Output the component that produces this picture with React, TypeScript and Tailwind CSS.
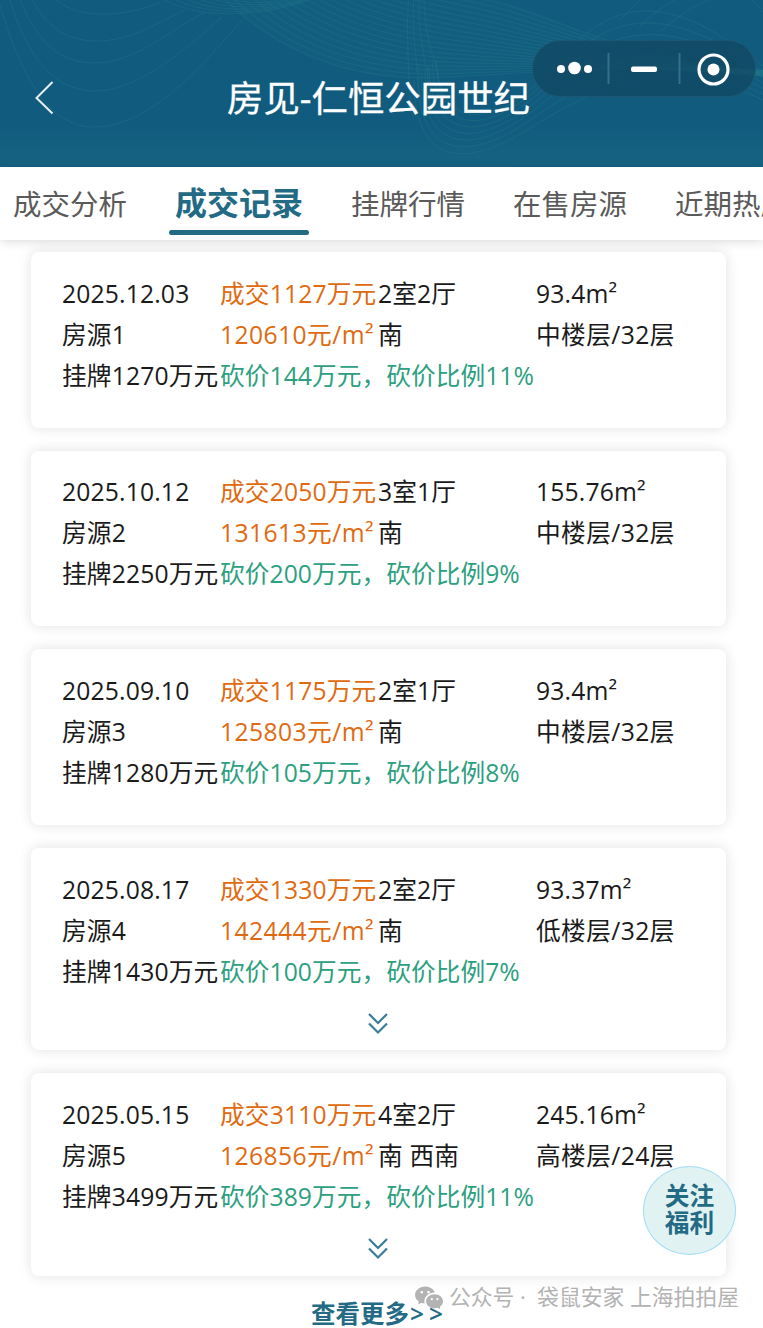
import clsx from "clsx";
import { BsWechat } from "react-icons/bs";

type Deal = {
  date: string;
  price: string;
  layout: string;
  area: string;
  name: string;
  unit: string;
  facing: string;
  floor: string;
  listed: string;
  cut: string;
  more?: boolean;
};

const deals: Deal[] = [
  { date: "2025.12.03", price: "成交1127万元", layout: "2室2厅", area: "93.4m²", name: "房源1", unit: "120610元/m²", facing: "南", floor: "中楼层/32层", listed: "挂牌1270万元", cut: "砍价144万元，砍价比例11%" },
  { date: "2025.10.12", price: "成交2050万元", layout: "3室1厅", area: "155.76m²", name: "房源2", unit: "131613元/m²", facing: "南", floor: "中楼层/32层", listed: "挂牌2250万元", cut: "砍价200万元，砍价比例9%" },
  { date: "2025.09.10", price: "成交1175万元", layout: "2室1厅", area: "93.4m²", name: "房源3", unit: "125803元/m²", facing: "南", floor: "中楼层/32层", listed: "挂牌1280万元", cut: "砍价105万元，砍价比例8%" },
  { date: "2025.08.17", price: "成交1330万元", layout: "2室2厅", area: "93.37m²", name: "房源4", unit: "142444元/m²", facing: "南", floor: "低楼层/32层", listed: "挂牌1430万元", cut: "砍价100万元，砍价比例7%", more: true },
  { date: "2025.05.15", price: "成交3110万元", layout: "4室2厅", area: "245.16m²", name: "房源5", unit: "126856元/m²", facing: "南 西南", floor: "高楼层/24层", listed: "挂牌3499万元", cut: "砍价389万元，砍价比例11%", more: true },
];

const tabs = ["成交分析", "成交记录", "挂牌行情", "在售房源", "近期热度"];

// Each family blends from one curve to another: a start point plus two cubic segments.
const families = [
  { n: 19, a: [222, -4, 265, 40, 330, 78, 425, 78, 500, 76, 600, 62, 763, 76], b: [350, -40, 400, -12, 450, -12, 510, 6, 580, 28, 650, 66, 763, 70] },
  { n: 7, a: [414, 80, 414, 165, 465, 170, 530, 128, 590, 92, 660, 50, 763, 100], b: [436, 60, 440, 135, 500, 130, 560, 60, 620, -12, 680, 0, 763, 66] },
  { n: 6, a: [155, -6, 190, 20, 260, 20, 320, -4, 325, -6, 328, -8, 330, -10], b: [195, -14, 230, 8, 280, 6, 330, -10, 335, -11, 340, -12, 350, -14] },
  { n: 4, a: [409, -4, 406, 30, 408, 50, 409, 80, 409, 90, 409, 95, 411, 100], b: [424, -4, 424, 20, 428, 45, 436, 65, 438, 80, 440, 95, 444, 100] },
  { n: 3, a: [620, 20, 635, 5, 640, 0, 645, -6, 650, -8, 655, -10, 660, -12], b: [660, 32, 690, 5, 715, -6, 740, -6, 750, -6, 757, 6, 763, 12] },
];

const bowls = [
  "M0 5C12 45 38 127 93 127C150 127 198 70 243 19",
  "M10 0C25 50 50 91 95 91C140 91 190 45 222 17",
  "M20 0C36 38 56 63 95 63C135 63 170 30 205 12",
  "M32 0C46 25 64 41 97 41C130 41 160 22 185 10",
  "M56 0C70 10 82 14 103 14C125 14 142 9 160 3",
];

function Waves() {
  return (
    <svg className="absolute inset-0 h-full w-full" viewBox="0 0 763 167" fill="none" stroke="#2a8290" strokeOpacity="0.26">
      <path d="M222 0C265 40 330 78 425 78C500 76 560 60 610 45C570 25 540 12 500 0Z" fill="#2a8290" fillOpacity="0.08" stroke="none" />
      {bowls.map((d) => (
        <path key={d} d={d} />
      ))}
      {families.map(({ n, a, b }, f) =>
        Array.from({ length: n }, (_, i) => {
          const p = a.map((v, k) => (v + ((b[k] - v) * i) / (n - 1)).toFixed(1));
          return <path key={`${f}-${i}`} d={`M${p[0]} ${p[1]}C${p.slice(2, 8).join(" ")}C${p.slice(8).join(" ")}`} />;
        })
      )}
    </svg>
  );
}

function Header() {
  return (
    <header className="relative h-[167px] bg-linear-to-b from-[#115c7e] from-75% to-[#166484]">
      <Waves />
      <div className="relative flex h-full items-center justify-center pt-[28px]">
        <h1 className="-ml-[6px] text-[36.400px] leading-[50px] text-white [-webkit-text-stroke:0.3px_white]">房见-仁恒公园世纪</h1>
      </div>
      <svg className="absolute left-[34px] top-[80px] h-[35px] w-[21px]" viewBox="0 0 21 35" fill="none" stroke="white" strokeOpacity="0.9" strokeWidth="2">
        <path d="M18.500 2 2.500 18l16 15.500" />
      </svg>
      <div className="absolute left-[532px] top-[40px] flex h-[57px] w-[224px] items-center rounded-full border border-[#2c6078]/50 bg-[#0f4560]/70">
        <svg className="h-full w-full" viewBox="0 0 222 55" fill="white">
          <circle cx="28" cy="28" r="4" />
          <circle cx="41.500" cy="27" r="6.300" />
          <circle cx="55" cy="28" r="4" />
          <path d="M75.500 12v31M146.500 12v31" stroke="#31718a" strokeWidth="2" />
          <rect x="98" y="25.500" width="26" height="5.500" rx="2" />
          <circle cx="180.500" cy="28.500" r="14.500" fill="none" stroke="white" strokeWidth="3.200" />
          <circle cx="180.500" cy="28.500" r="6" />
        </svg>
      </div>
    </header>
  );
}

function DealCard({ deal }: { deal: Deal }) {
  return (
    <article
      className={clsx(
        "rounded-lg bg-white pl-[31px] pt-[20.800px] shadow-[0_0_14px_rgba(0,0,0,0.12)]",
        deal.more ? "h-[202.500px]" : "h-[175.500px]"
      )}
    >
      <div className="grid grid-cols-[repeat(4,158px)] whitespace-nowrap text-[24.700px] leading-[41px] tracking-[0.15px] text-[#1a1a1a]">
        <span>{deal.date}</span>
        <span className="text-[#e06a10]">{deal.price}</span>
        <span>{deal.layout}</span>
        <span>{deal.area}</span>
        <span>{deal.name}</span>
        <span className="tracking-[0.4px] text-[#e06a10]">{deal.unit}</span>
        <span>{deal.facing}</span>
        <span className="tracking-[0.4px]">{deal.floor}</span>
        <span>{deal.listed}</span>
        <span className="col-span-3 tracking-[0.050px] text-[#2ca080]">{deal.cut}</span>
      </div>
      {deal.more && (
        <svg className="ml-[305px] mt-[20px] h-[24px] w-[22px]" viewBox="0 0 22 24" fill="none" stroke="#397d98" strokeWidth="2.200">
          <path d="M2 2l9 9 9-9M2 11.500l9 9 9-9" />
        </svg>
      )}
    </article>
  );
}

export default function App() {
  return (
    <div className="relative h-[1328px] w-[763px] overflow-hidden bg-white font-['Open_Sans','Noto_Sans_CJK_SC',sans-serif]">
      <Header />
      <nav className="relative z-10 flex h-[73px] gap-[48px] whitespace-nowrap bg-white pl-[13px] text-[28.500px] leading-[75px] text-[#5a5a5a] shadow-[0_1px_10px_rgba(0,0,0,0.16)]">
        {tabs.map((tab, i) =>
          i === 1 ? (
            <span key={tab} className="relative text-[32px] font-bold leading-[72px] text-[#236a85]">
              {tab}
              <span className="absolute -left-[6px] top-[63px] h-[5px] w-[140px] rounded-full bg-[#236a85]" />
            </span>
          ) : (
            <span key={tab}>{tab}</span>
          )
        )}
      </nav>
      <main className="flex flex-col gap-[23.100px] pl-[31px] pr-[37px] pt-[12px]">
        {deals.map((deal) => (
          <DealCard key={deal.date} deal={deal} />
        ))}
      </main>
      <div className="ml-[311px] mt-[18px] text-[24.500px] font-bold leading-[40px] text-[#236a85]">
        查看更多<span className="pl-px font-semibold tracking-[5px]">&gt;&gt;</span>
      </div>

      <button className="absolute left-[643px] top-[1166px] flex h-[89px] w-[93px] items-center justify-center rounded-[50%] border border-[#9edcf8] bg-[#e1f2f2] pb-[3px] text-[24.700px] font-bold leading-[27px] text-[#236a85]">
        <span>
          关注
          <br />
          福利
        </span>
      </button>
      <div className="absolute left-[415px] top-[1282px] flex items-center whitespace-nowrap text-[#b3b3b3]">
        <BsWechat className="size-[28px]" />
        <span className="ml-[6px] text-[21.800px] leading-[30px]">公众号 ·&nbsp; 袋鼠安家 上海拍拍屋</span>
      </div>
    </div>
  );
}
